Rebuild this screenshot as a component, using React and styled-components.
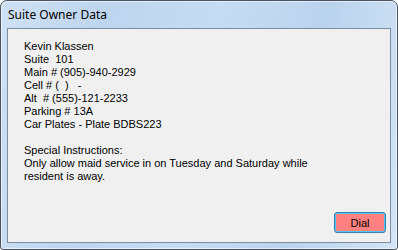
import React from "react";
import styled, { createGlobalStyle } from "styled-components";

const GlobalStyle = createGlobalStyle`
  html, body {
    margin: 0;
    padding: 0;
    background: #ffffff;
  }
`;

const Window = styled.div`
  box-sizing: border-box;
  width: 398px;
  height: 250px;
  display: flex;
  flex-direction: column;
  padding: 0 6px 6px;
  border: 1px solid #4a5462;
  border-radius: 7px 7px 3px 3px;
  box-shadow: inset 0 0 0 1px rgba(255, 255, 255, 0.55);
  background: linear-gradient(
    100deg,
    #cfe1f4 0%,
    #bdd5ee 25%,
    #c6dcf2 50%,
    #bad3ed 75%,
    #d3e5f6 100%
  );
`;

const TitleBar = styled.div`
  height: 27px;
  display: flex;
  align-items: center;
  padding-left: 1px;
  font-family: "Noto Sans", "Open Sans", sans-serif;
  font-size: 12px;
  color: #000;
`;

const Client = styled.div`
  flex: 1;
  display: flex;
  flex-direction: column;
  background: #f0f0f0;
  border: 1px solid #7d8c9d;
  font-family: "Liberation Sans", Arial, sans-serif;
  font-size: 11px;
  color: #000;
`;

const Info = styled.div`
  padding: 11px 0 0 16px;
  line-height: 13px;
`;

const Line = styled.div`
  white-space: pre;
  min-height: 13px;
`;

const Notes = styled.div`
  width: 292px;
`;

const Footer = styled.div`
  margin-top: auto;
  display: flex;
  justify-content: flex-end;
  padding: 0 4px 9px 0;
`;

const Button = styled.button`
  width: 52px;
  height: 21px;
  padding: 0;
  border: 1px solid #3c7fb1;
  border-radius: 3px;
  background: #ff8080;
  box-shadow: inset 0 0 0 1px #48c8f4;
  font-family: "Liberation Sans", Arial, sans-serif;
  font-size: 11px;
  color: #000;
`;

const lines = [
  "Kevin Klassen",
  "Suite  101",
  "Main # (905)-940-2929",
  "Cell # (  )   -",
  "Alt  # (555)-121-2233",
  "Parking # 13A",
  "Car Plates - Plate BDBS223",
  "",
  "Special Instructions:",
];

export default function App() {
  return (
    <>
      <GlobalStyle />
      <Window>
        <TitleBar>Suite Owner Data</TitleBar>
        <Client>
          <Info>
            {lines.map((text, i) => (
              <Line key={i}>{text}</Line>
            ))}
            <Notes>
              Only allow maid service in on Tuesday and Saturday while resident is away.
            </Notes>
          </Info>
          <Footer>
            <Button>Dial</Button>
          </Footer>
        </Client>
      </Window>
    </>
  );
}
